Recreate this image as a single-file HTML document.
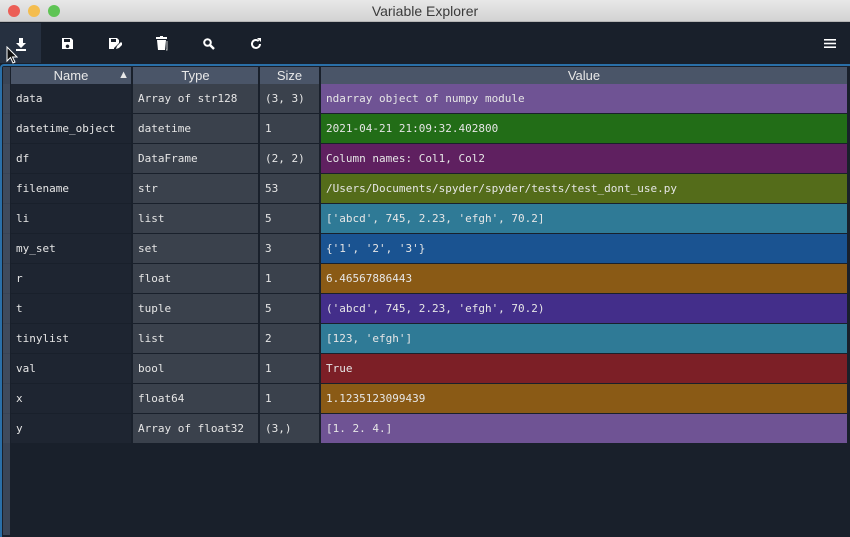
<!DOCTYPE html>
<html><head><meta charset="utf-8"><style>
*{margin:0;padding:0;box-sizing:border-box}
body{width:850px;height:537px;overflow:hidden;background:#19202b;position:relative;font-family:"DejaVu Sans Mono","Liberation Mono",monospace}
.tb{position:absolute;left:0;top:0;width:850px;height:22px;background:linear-gradient(#e8e8e8,#d3d3d3);border-bottom:1px solid #b5b5b5;text-align:center;font:14px/22px "Liberation Sans",sans-serif;color:#3a3a3a}
.dot{position:absolute;top:5px;width:12px;height:12px;border-radius:50%}
.tool{position:absolute;top:23px;left:0;width:850px;height:41px;background:#19202b}
.act{position:absolute;left:0;top:23px;width:41px;height:40px;background:#263040}
.ic{position:absolute}
.frame{position:absolute;left:0;top:64px;width:850px;height:473px;border-top:2px solid #2a6fa8;border-left:2px solid #2a6fa8;border-top-left-radius:4px}
.gut{position:absolute;left:3px;top:67px;width:7px;height:468px;background:#3b4556}
.c{position:absolute;height:29px;line-height:29px;font-size:11px;color:#e6e6e6;padding-left:5px;white-space:nowrap;overflow:hidden}
.h{position:absolute;top:67px;height:17px;background:#4a5568;color:#e8e8e8;font:13px/17px "Liberation Sans",sans-serif;text-align:center}
.g{position:absolute;left:3px;width:7px;height:29px;background:#404a5b}
</style></head><body>
<div class="tb">Variable Explorer</div>
<div class="dot" style="left:8px;background:#ec5f57"></div>
<div class="dot" style="left:28px;background:#f4bd4f"></div>
<div class="dot" style="left:48px;background:#5fc455"></div>
<div class="tool"></div>
<div class="act"></div>
<svg class="ic" style="left:14px;top:37px" width="14" height="14" viewBox="0 0 14 14" fill="#fff"><path d="M5 1h4v5h3l-5 5-5-5h3z"/><rect x="2" y="12" width="10" height="2"/></svg>
<svg class="ic" style="left:61px;top:37px" width="13" height="13" viewBox="0 0 13 13" fill="#fff"><path d="M1 1h9l2 2v9H1zM3 2v3h6V2zM6.5 7.5a1.8 1.8 0 1 0 .01 0z" fill-rule="evenodd"/></svg>
<svg class="ic" style="left:108px;top:37px" width="14" height="13" viewBox="0 0 14 13" fill="#fff"><path d="M1 1h8l2 2v3l-5 5v1H1zM3 2v3h5V2z" fill-rule="evenodd"/><path d="M8 12l1-3 4-4 2 2-4 4z"/></svg>
<svg class="ic" style="left:156px;top:36px" width="12" height="15" viewBox="0 0 12 15" fill="#fff"><rect x="0" y="1" width="11" height="2"/><rect x="4" y="0" width="3" height="2"/><path d="M1 4h9l-1 10H2z"/><path d="M11 5v9h-1" stroke="#ccc" fill="none"/></svg>
<svg class="ic" style="left:203px;top:38px" width="12" height="12" viewBox="0 0 12 12"><circle cx="4.5" cy="4.5" r="3.3" fill="none" stroke="#fff" stroke-width="2"/><path d="M7 7l4 4" stroke="#fff" stroke-width="2.4"/></svg>
<svg class="ic" style="left:250px;top:38px" width="12" height="12" viewBox="0 0 12 12"><path d="M10 6a4 4 0 1 1-1.3-3" fill="none" stroke="#fff" stroke-width="2"/><path d="M7 0l4 0 0 4z" fill="#fff"/></svg>
<svg class="ic" style="left:824px;top:39px" width="12" height="9" viewBox="0 0 12 9" fill="#fff"><rect y="0" width="12" height="1.6"/><rect y="3.7" width="12" height="1.6"/><rect y="7.4" width="12" height="1.6"/></svg>
<svg class="ic" style="left:6px;top:46px" width="12" height="18" viewBox="0 0 12 18"><path d="M1 1v14l3.5-3.5 2.5 5.5 2-1-2.5-5H11z" fill="#111" stroke="#fff" stroke-width="1"/></svg>
<div class="frame"></div>
<div class="gut"></div>
<div class="h" style="left:11px;width:120px">Name<span style="position:absolute;right:2px;top:0;font-size:11px">&#9650;</span></div>
<div class="h" style="left:133px;width:125px">Type</div>
<div class="h" style="left:260px;width:59px">Size</div>
<div class="h" style="left:321px;width:526px">Value</div>
<div class="g" style="top:84px"></div><div class="c" style="top:84px;left:11px;width:120px;background:#1e2531">data</div><div class="c" style="top:84px;left:133px;width:125px;background:#3a414c">Array of str128</div><div class="c" style="top:84px;left:260px;width:59px;background:#3a414c">(3, 3)</div><div class="c" style="top:84px;left:321px;width:526px;background:#6f5394">ndarray object of numpy module</div>
<div class="g" style="top:114px"></div><div class="c" style="top:114px;left:11px;width:120px;background:#1e2531">datetime_object</div><div class="c" style="top:114px;left:133px;width:125px;background:#3a414c">datetime</div><div class="c" style="top:114px;left:260px;width:59px;background:#3a414c">1</div><div class="c" style="top:114px;left:321px;width:526px;background:#226d17">2021-04-21 21:09:32.402800</div>
<div class="g" style="top:144px"></div><div class="c" style="top:144px;left:11px;width:120px;background:#1e2531">df</div><div class="c" style="top:144px;left:133px;width:125px;background:#3a414c">DataFrame</div><div class="c" style="top:144px;left:260px;width:59px;background:#3a414c">(2, 2)</div><div class="c" style="top:144px;left:321px;width:526px;background:#5f2060">Column names: Col1, Col2</div>
<div class="g" style="top:174px"></div><div class="c" style="top:174px;left:11px;width:120px;background:#1e2531">filename</div><div class="c" style="top:174px;left:133px;width:125px;background:#3a414c">str</div><div class="c" style="top:174px;left:260px;width:59px;background:#3a414c">53</div><div class="c" style="top:174px;left:321px;width:526px;background:#546c1a">/Users/Documents/spyder/spyder/tests/test_dont_use.py</div>
<div class="g" style="top:204px"></div><div class="c" style="top:204px;left:11px;width:120px;background:#1e2531">li</div><div class="c" style="top:204px;left:133px;width:125px;background:#3a414c">list</div><div class="c" style="top:204px;left:260px;width:59px;background:#3a414c">5</div><div class="c" style="top:204px;left:321px;width:526px;background:#2f7a96">['abcd', 745, 2.23, 'efgh', 70.2]</div>
<div class="g" style="top:234px"></div><div class="c" style="top:234px;left:11px;width:120px;background:#1e2531">my_set</div><div class="c" style="top:234px;left:133px;width:125px;background:#3a414c">set</div><div class="c" style="top:234px;left:260px;width:59px;background:#3a414c">3</div><div class="c" style="top:234px;left:321px;width:526px;background:#1a5391">{'1', '2', '3'}</div>
<div class="g" style="top:264px"></div><div class="c" style="top:264px;left:11px;width:120px;background:#1e2531">r</div><div class="c" style="top:264px;left:133px;width:125px;background:#3a414c">float</div><div class="c" style="top:264px;left:260px;width:59px;background:#3a414c">1</div><div class="c" style="top:264px;left:321px;width:526px;background:#8a5a15">6.46567886443</div>
<div class="g" style="top:294px"></div><div class="c" style="top:294px;left:11px;width:120px;background:#1e2531">t</div><div class="c" style="top:294px;left:133px;width:125px;background:#3a414c">tuple</div><div class="c" style="top:294px;left:260px;width:59px;background:#3a414c">5</div><div class="c" style="top:294px;left:321px;width:526px;background:#432e8a">('abcd', 745, 2.23, 'efgh', 70.2)</div>
<div class="g" style="top:324px"></div><div class="c" style="top:324px;left:11px;width:120px;background:#1e2531">tinylist</div><div class="c" style="top:324px;left:133px;width:125px;background:#3a414c">list</div><div class="c" style="top:324px;left:260px;width:59px;background:#3a414c">2</div><div class="c" style="top:324px;left:321px;width:526px;background:#2f7a96">[123, 'efgh']</div>
<div class="g" style="top:354px"></div><div class="c" style="top:354px;left:11px;width:120px;background:#1e2531">val</div><div class="c" style="top:354px;left:133px;width:125px;background:#3a414c">bool</div><div class="c" style="top:354px;left:260px;width:59px;background:#3a414c">1</div><div class="c" style="top:354px;left:321px;width:526px;background:#7c1f26">True</div>
<div class="g" style="top:384px"></div><div class="c" style="top:384px;left:11px;width:120px;background:#1e2531">x</div><div class="c" style="top:384px;left:133px;width:125px;background:#3a414c">float64</div><div class="c" style="top:384px;left:260px;width:59px;background:#3a414c">1</div><div class="c" style="top:384px;left:321px;width:526px;background:#8a5a15">1.1235123099439</div>
<div class="g" style="top:414px"></div><div class="c" style="top:414px;left:11px;width:120px;background:#1e2531">y</div><div class="c" style="top:414px;left:133px;width:125px;background:#3a414c">Array of float32</div><div class="c" style="top:414px;left:260px;width:59px;background:#3a414c">(3,)</div><div class="c" style="top:414px;left:321px;width:526px;background:#6f5394">[1. 2. 4.]</div>
</body></html>
